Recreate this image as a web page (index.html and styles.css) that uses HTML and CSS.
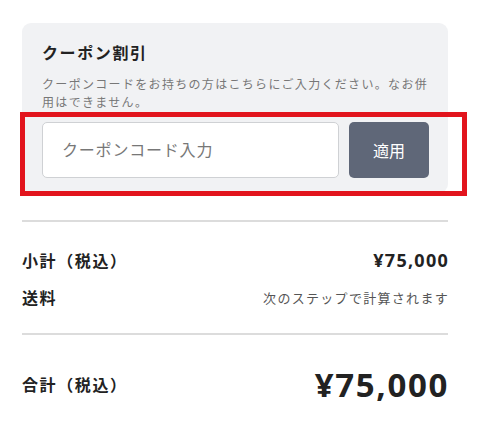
FILE: index.html
```html
<!DOCTYPE html>
<html lang="ja">
<head>
<meta charset="utf-8">
<title>カート</title>
<link rel="stylesheet" href="styles.css">
</head>
<body>
    <!-- ===== Cart summary ===== -->
    <div class="cart">
        <div class="coupon">
            <h3 class="coupon-title">クーポン割引</h3>
            <p class="coupon-note">クーポンコードをお持ちの方はこちらにご入力ください。なお併用はできません。</p>
            <div class="coupon-form">
                <input type="text" name="coupon" id="coupon" placeholder="クーポンコード入力">
                <button type="button">適用</button>
            </div>
        </div>

        <div class="totals">
            <div class="row">
                <span class="label">小計（税込）</span>
                <span class="price">¥75,000</span>
            </div>
            <div class="row">
                <span class="label">送料</span>
                <span class="note">次のステップで計算されます</span>
            </div>
        </div>

        <div class="grand">
            <div class="row">
                <span class="label">合計（税込）</span>
                <span class="price big">¥75,000</span>
            </div>
        </div>

        <!-- annotation frame -->
        <div class="highlight"></div>
    </div>
</body>
</html>
```

FILE: styles.css
```css
* {
    margin: 0;
    padding: 0;
    box-sizing: border-box;
}

body {
    background-color: #fff;
    color: #222;
    font-family: "Noto Sans", "Noto Sans CJK JP", sans-serif;
}

.cart {
    position: relative;
    width: 470px;
    padding: 23px 22px 0 22px;
}

.coupon {
    background-color: #f1f2f4;
    border-radius: 9px;
    padding: 19px 19px 15px 20px;
}

.coupon-title {
    font-size: 16px;
    font-weight: 700;
    line-height: 22px;
    letter-spacing: 0.1em;
    color: #222;
}

.coupon-note {
    margin-top: 12px;
    font-size: 12px;
    line-height: 18px;
    letter-spacing: 0.11em;
    color: #777;
}

.coupon-form {
    display: flex;
    gap: 10px;
    margin-top: 10px;
}

.coupon-form input {
    flex: 1;
    height: 56px;
    padding: 0 19px;
    border: 1px solid #cfd1d4;
    border-radius: 5px;
    background-color: #fff;
    font-family: inherit;
    font-size: 16px;
    letter-spacing: 0.05em;
    outline: none;
}

.coupon-form input::placeholder {
    color: #777;
}

.coupon-form button {
    width: 80px;
    height: 56px;
    border: none;
    border-radius: 5px;
    background-color: #5f6778;
    color: #fff;
    font-family: inherit;
    font-size: 16px;
}

.totals {
    margin-top: 27px;
    border-top: 2px solid #dcdcdc;
    padding: 24px 0 22px;
}

.row {
    display: flex;
    justify-content: space-between;
    align-items: center;
    height: 28px;
}

.totals .row + .row {
    margin-top: 9px;
}

.label {
    font-size: 16px;
    font-weight: 700;
    letter-spacing: 0.1em;
}

.price {
    font-size: 18px;
    font-weight: 700;
    letter-spacing: 0.07em;
    margin-right: -1px;
}

.note {
    font-size: 13px;
    letter-spacing: 0.1em;
    color: #555;
    margin-right: -1px;
}

.grand {
    border-top: 2px solid #dcdcdc;
    padding-top: 26px;
}

.grand .row {
    height: 46px;
}

.price.big {
    font-size: 33px;
    letter-spacing: 0.05em;
}

.highlight {
    position: absolute;
    left: 20px;
    top: 112px;
    width: 447px;
    height: 84px;
    border: 5px solid #e2141d;
}
```
